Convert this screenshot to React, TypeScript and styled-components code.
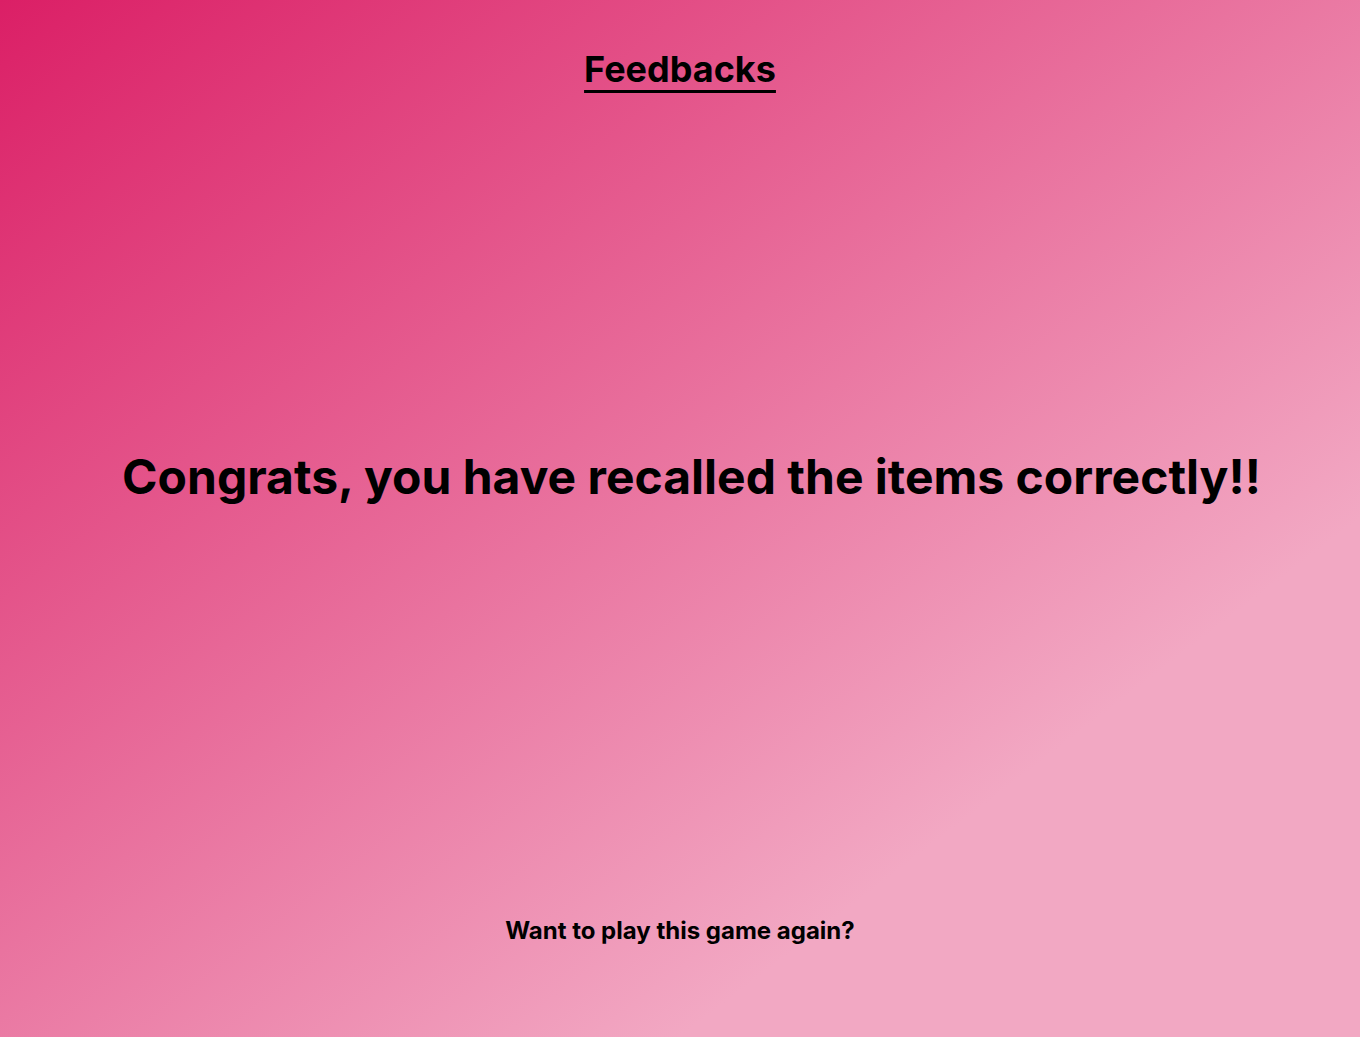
import React from "react";
import styled, { createGlobalStyle } from "styled-components";

const GlobalStyle = createGlobalStyle`
  html, body {
    margin: 0;
    padding: 0;
  }
  body {
    font-family: Inter, "Noto Sans", sans-serif;
  }
`;

const Page = styled.main`
  min-height: 100vh;
  box-sizing: border-box;
  background: linear-gradient(to bottom right, #db1f66 0%, #f2a8c3 75%, #f2a8c3 100%);
  display: flex;
  flex-direction: column;
  align-items: center;
  padding-top: 47px;
  color: #000;
`;

const Title = styled.h1`
  margin: 0;
  font-size: 36px;
  font-weight: 700;
  line-height: normal;
  text-decoration: underline;
  text-decoration-thickness: 3px;
  text-underline-offset: 8px;
`;

const Message = styled.h2`
  margin: 356px 0 0;
  padding-left: 23px;
  font-size: 48px;
  font-weight: 700;
  line-height: normal;
  text-align: center;
`;

const Prompt = styled.p`
  margin: 410px 0 0;
  font-size: 24px;
  font-weight: 700;
  line-height: normal;
`;

export default function App() {
  return (
    <>
      <GlobalStyle />
      <Page>
        <Title>Feedbacks</Title>
        <Message>Congrats, you have recalled the items correctly!!</Message>
        <Prompt>Want to play this game again?</Prompt>
      </Page>
    </>
  );
}
